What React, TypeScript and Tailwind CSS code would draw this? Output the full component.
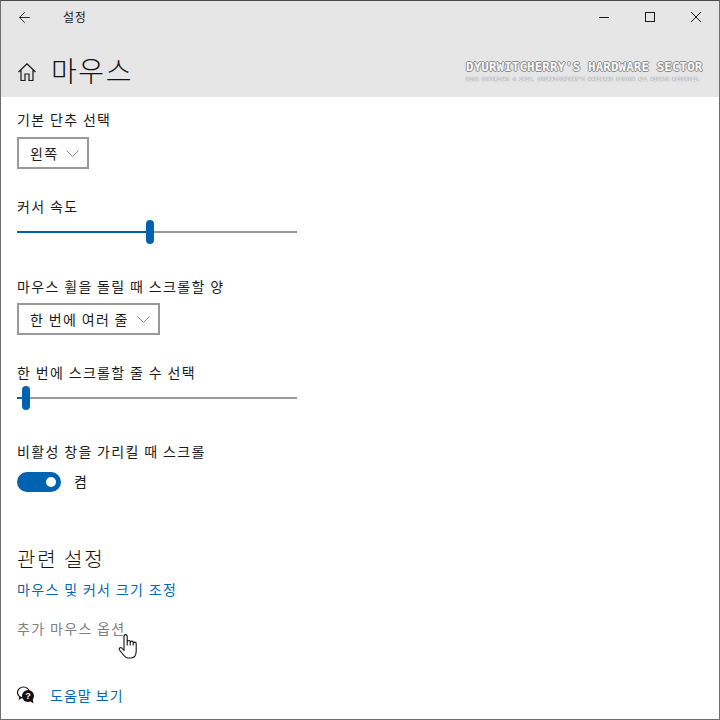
import React from 'react';
import { ArrowLeft } from 'lucide-react';

const font = 'font-["Noto_Sans_CJK_KR","Noto_Sans",sans-serif]';

function Label({ children }: { children: React.ReactNode }) {
  return <div className="h-[20px] text-[14px] leading-[20px] tracking-[1.35px] text-[#1a1a1a] whitespace-nowrap">{children}</div>;
}

function Dropdown({ text, width }: { text: string; width: string }) {
  return (
    <div className={`${width} h-[32px] border-2 border-[#999999] flex items-center justify-between pl-[11px] pr-[8px] text-[14px] tracking-[1.35px] text-[#1a1a1a] whitespace-nowrap`}>
      <span>{text}</span>
      <svg width="13" height="7" viewBox="0 0 13 7" className="shrink-0">
        <path d="M.5.5l6 6 6-6" fill="none" stroke="#8a8a8a" strokeWidth="1" />
      </svg>
    </div>
  );
}

function Slider({ percent }: { percent: number }) {
  return (
    <div className="relative w-[280px] h-[24px] flex items-center">
      <div className="h-[2px] bg-[#0063b1]" style={{ width: `${percent}%` }} />
      <div className="h-[2px] flex-1 bg-[#999999]" />
      <div className="absolute top-0 w-[8px] h-[24px] rounded-full bg-[#0063b1]" style={{ left: `${percent}%`, marginLeft: -4 }} />
    </div>
  );
}

export default function App() {
  return (
    <div className={`${font} w-[720px] h-[720px] bg-white border border-[#6e6e6e] border-t-[#4a4a4a] flex flex-col overflow-hidden`}>
      {/* Title area */}
      <header className="relative h-[96px] shrink-0 bg-[#e6e6e6]">
        <div className="h-[32px] flex items-center">
          <ArrowLeft className="ml-[15px] w-[17px] h-[17px] text-[#222222]" strokeWidth={1.3} />
          <span className="ml-[30px] text-[12px] tracking-[0.6px] text-[#1a1a1a]">설정</span>
          <div className="ml-auto flex items-center text-[#1a1a1a]">
            <div className="w-[46px] flex justify-center"><div className="w-[10px] h-[1px] bg-[#1a1a1a]" /></div>
            <div className="w-[46px] flex justify-center"><div className="w-[10px] h-[10px] border border-[#1a1a1a]" /></div>
            <div className="w-[46px] flex justify-center">
              <svg width="10" height="10" viewBox="0 0 10 10">
                <path d="M0 0l10 10M10 0 0 10" stroke="#1a1a1a" strokeWidth="1" />
              </svg>
            </div>
          </div>
        </div>
        <div className="flex items-center h-[46px] mt-[14px]">
          <svg className="ml-[17px] mt-[3px] shrink-0" width="18" height="18" viewBox="0 0 18 18">
            <path d="M.5 9 9 .8 17.500 9M3 7v10.500h4V11h4v6.500h4V7" fill="none" stroke="#1a1a1a" strokeWidth="1.200" />
          </svg>
          <span className="ml-[15px] text-[28px] font-light leading-[36px] tracking-[1.6px] text-[#111111]">마우스</span>
        </div>
        <div className="absolute left-[465px] top-[58px] w-[238px] font-['DejaVu_Sans_Mono',monospace] text-[#f8f8f8]">
          <div className="text-[12.500px] leading-[15px] font-bold tracking-[0.1px] whitespace-nowrap [text-shadow:1px_0_#8c8c8c,-1px_0_#8c8c8c,0_1px_#8c8c8c,0_-1px_#8c8c8c]">DYURWITCHERRY'S HARDWARE SECTOR</div>
          <div className="text-[5px] leading-[7px] mt-[2px] font-bold whitespace-nowrap text-[#f4f4f4] tracking-[0.12px] [text-shadow:0_0_1px_#8c8c8c,0_0_1px_#8c8c8c]">BLOG COPYRIGHT © 2018. DYURWITCHERRY'S HARDWARE SECTOR ALL RIGHTS RESERVED.</div>
        </div>
      </header>

      {/* Settings */}
      <main className="flex-1 flex flex-col pl-[16px] pt-[12px]">
        <Label>기본 단추 선택</Label>
        <div className="mt-[8px]"><Dropdown text="왼쪽" width="w-[72px]" /></div>

        <div className="mt-[27px]"><Label>커서 속도</Label></div>
        <div className="mt-[4px]"><Slider percent={47.5} /></div>

        <div className="mt-[32px]"><Label>마우스 휠을 돌릴 때 스크롤할 양</Label></div>
        <div className="mt-[7px]"><Dropdown text="한 번에 여러 줄" width="w-[143px]" /></div>

        <div className="mt-[27px]"><Label>한 번에 스크롤할 줄 수 선택</Label></div>
        <div className="mt-[4px]"><Slider percent={3.2} /></div>

        <div className="mt-[31px]"><Label>비활성 창을 가리킬 때 스크롤</Label></div>
        <div className="mt-[10px] flex items-center">
          <div className="w-[44px] h-[20px] rounded-full bg-[#0063b1] flex items-center justify-end pr-[5px]">
            <div className="w-[10px] h-[10px] rounded-full bg-white" />
          </div>
          <span className="ml-[13px] text-[14px] text-[#1a1a1a]">켬</span>
        </div>

        <h2 className="mt-[53px] h-[28px] text-[20px] font-light leading-[28px] tracking-[1.9px] text-[#111111]">관련 설정</h2>
        <a className="mt-[6px] h-[20px] text-[14px] leading-[20px] tracking-[1.35px] text-[#0067b8]">마우스 및 커서 크기 조정</a>
        <div className="relative mt-[19px] h-[20px] w-[200px] text-[14px] leading-[20px] tracking-[1.35px] text-[#808080]">
          추가 마우스 옵션
          {/* hand cursor */}
          <svg className="absolute left-[101px] top-[15px]" width="22" height="27" viewBox="0 0 22 27">
            <path d="M6 14V3.200a1.600 1.600 0 0 1 3.200 0V12V9a1.500 1.500 0 0 1 3 0v3V9.600a1.500 1.500 0 0 1 3 0V12v-1.400a1.500 1.500 0 0 1 3 0V18c0 4-2 7-5.500 7H10c-2.500 0-3.500-1.500-5-3.500L1.500 17c-1-1.500.8-3.200 2.200-2L6 17.500Z" fill="#ffffff" stroke="#111111" strokeWidth="1.100" strokeLinejoin="round" />
          </svg>
        </div>
        <div className="mt-[47px] flex items-center h-[20px]">
          <svg width="18" height="18" viewBox="0 0 18 18" className="shrink-0">
            <ellipse cx="6.500" cy="6.500" rx="6" ry="5.500" fill="#ffffff" stroke="#111111" strokeWidth="1.200" />
            <path d="M2.500 10.500 1.500 14 6 11.500Z" fill="#111111" />
            <circle cx="11" cy="10" r="6" fill="#111111" />
            <path d="M13 15l3.500 2.500-1-4.500Z" fill="#111111" />
            <text x="11" y="13" textAnchor="middle" fontSize="9" fontWeight="700" fill="#ffffff" fontFamily="Liberation Sans, sans-serif">?</text>
          </svg>
          <a className="ml-[15px] text-[14px] tracking-[1px] text-[#0067b8]">도움말 보기</a>
        </div>
      </main>
    </div>
  );
}
